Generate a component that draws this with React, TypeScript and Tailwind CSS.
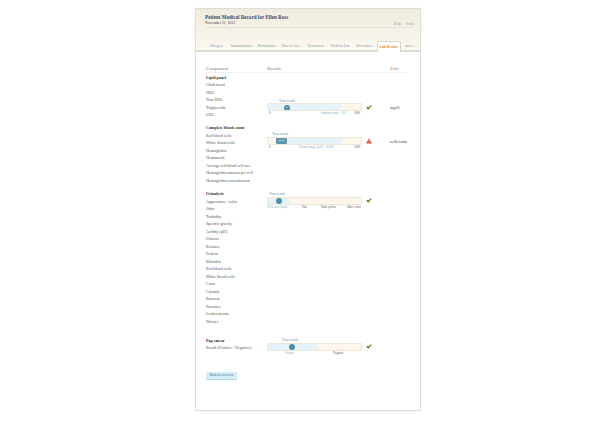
const font = "font-['Liberation_Serif',serif]";

const tabs = [
  { label: "Allergies", width: "w-[24px]" },
  { label: "Immunizations", width: "w-[27px]" },
  { label: "Medications", width: "w-[23px]" },
  { label: "Plan of Care", width: "w-[25px]" },
  { label: "Encounters", width: "w-[25px]" },
  { label: "Problem List", width: "w-[24px]" },
  { label: "Procedures", width: "w-[24.5px]" },
];

function Check() {
  return (
    <svg viewBox="0 0 12 10" className="w-[6px] h-[5px] shrink-0">
      <path d="M1 5.5 L4.5 9 L11 1.5 L10 1 L4.5 5.5 L2.5 4 Z" fill="#4f7f14" stroke="#4f7f14" strokeWidth="0.8" />
    </svg>
  );
}

function Warning() {
  return (
    <svg viewBox="0 0 12 11" className="w-[6px] h-[6px] shrink-0">
      <path d="M6 0.5 L11.8 10.5 H0.2 Z" fill="#d9402a" />
      <rect x="5.4" y="3.6" width="1.2" height="3.6" fill="#fff" />
      <rect x="5.4" y="8" width="1.2" height="1.2" fill="#fff" />
    </svg>
  );
}

function Row({ children }: { children: React.ReactNode }) {
  return <div className="h-[7.5px] leading-[7.5px] whitespace-nowrap">{children}</div>;
}

function Names({ title, names }: { title: string; names: string[] }) {
  return (
    <div className="w-[61px] shrink-0 text-[4.1px] text-[#555]">
      <div className="h-[7.5px] leading-[7.5px] font-bold text-[#333] whitespace-nowrap">{title}</div>
      {names.map((n) => (
        <Row key={n}>{n}</Row>
      ))}
    </div>
  );
}

function Track({ children }: { children: React.ReactNode }) {
  return (
    <div className="relative flex w-[95px] h-[8px] rounded-[1px] border border-[#eee6d8] bg-[#fdf6ec] overflow-hidden">
      {children}
    </div>
  );
}

export default function App() {
  return (
    <div className={`${font} w-[615px] h-[424px] bg-white pt-[8px] pl-[195px] text-[3.6px] text-[#555]`}>
      <div className="w-[226px] h-[403px] bg-white border border-[#dcdcdc] rounded-[1px] shadow-[0_0_1px_#ccc]">
        <div className="h-[43px] bg-gradient-to-b from-[#f1ebdf] to-[#fcf8f0] border-b-2 border-[#dcdad4] flex flex-col">
          <div className="ml-[9px] mr-[7px] h-[18.5px] pt-[5px] border-b border-[#e8e3d6] flex justify-between">
            <div>
              <div className="text-[5.1px] leading-[6px] font-bold text-[#2f4f6f] whitespace-nowrap">
                Patient Medical Record for Ellen Ross
              </div>
              <div className="text-[3.8px] leading-[6px] text-[#444]">November 21, 2012</div>
            </div>
            <div className="flex gap-[5.5px] items-end pb-[0.5px] text-[#8aa0a8] leading-[4px]">
              <span>Help</span>
              <span>Print</span>
            </div>
          </div>
          <div className="mt-auto flex items-end pl-[8px] h-[11px]">
            {tabs.map((t) => (
              <div key={t.label} className={`${t.width} h-[8px] leading-[8px] flex justify-center text-[#7f9aa3] whitespace-nowrap`}>
                {t.label}
              </div>
            ))}
            <div className="w-[24.5px] h-[11px] -mb-[2px] leading-[10px] bg-white border-t border-x border-[#cdd8c8] rounded-t-[2px] flex justify-center font-bold text-[#e88a1a] whitespace-nowrap">
              Lab Results
            </div>
            <div className="pl-[4px] h-[8px] leading-[8px] text-[#7f9aa3] whitespace-nowrap">more »</div>
          </div>
        </div>

        <div className="px-[10px] pt-[14px]">
          <div className="flex h-[7px] leading-[6px] text-[4.8px] italic text-[#777] border-b border-[#f0f0f0] mr-[2px]">
            <div className="w-[61px]">Component</div>
            <div className="w-[123px]">Results</div>
            <div>Unit</div>
          </div>

          <div className="flex mt-[0.5px]">
            <Names title="Lipid panel" names={["Cholesterol", "HDL", "Non-HDL", "Triglyceride", "LDL"]} />
            <div className="w-[123px] pt-[25px]">
              <div className="pl-[12px] h-[4px] leading-[4px] text-[#5b93a8]">Your result</div>
              <div className="flex items-center gap-[3.5px] mt-[0.5px]">
                <Track>
                  <div className="relative w-[73px] bg-[#e6f3fa]">
                    <div className="absolute left-[16px] top-[0.5px] w-[6px] h-[6px] rounded-full bg-[#4f8ea8] text-center text-[2.6px] leading-[6px] text-white">
                      98
                    </div>
                  </div>
                </Track>
                <Check />
              </div>
              <div className="relative w-[95px] h-[4px] leading-[4px] flex justify-between px-[2px] text-[3px]">
                <span>0</span>
                <span className="text-[#7fb0c4] pl-[42px]">Standard range &lt;150</span>
                <span>1000</span>
              </div>
            </div>
            <div className="pt-[30.5px] text-[4.1px] leading-[7.5px] text-[#444] whitespace-nowrap">mg/dl</div>
          </div>

          <div className="flex mt-[5.5px]">
            <Names
              title="Complete blood count"
              names={[
                "Red blood cells",
                "White blood cells",
                "Hemoglobin",
                "Hematocrit",
                "Average red blood cell size",
                "Hemoglobin amount per cell",
                "Hemoglobin concentration",
              ]}
            />
            <div className="w-[123px] pt-[8px]">
              <div className="pl-[5px] h-[4px] leading-[4px] text-[#5b93a8]">Your result</div>
              <div className="flex items-center gap-[3.5px] mt-[0.5px]">
                <Track>
                  <div className="w-[7px]" />
                  <div className="w-[66px] bg-[#e6f3fa]" />
                  <div className="absolute left-[8px] top-[0.5px] w-[11px] h-[6px] rounded-[1px] bg-[#5d97ab] text-center text-[2.6px] leading-[6px] text-white">
                    4,000
                  </div>
                </Track>
                <Warning />
              </div>
              <div className="relative w-[95px] h-[4px] leading-[4px] flex justify-between px-[2px] text-[3px]">
                <span>0</span>
                <span className="text-[#7fb0c4] pl-[8px]">Normal range 4,500 - 10,800</span>
                <span>1000</span>
              </div>
            </div>
            <div className="pt-[14px] text-[4.1px] leading-[7.5px] text-[#444] whitespace-nowrap">cells/cmm</div>
          </div>

          <div className="flex mt-[6px]">
            <Names
              title="Urinalysis"
              names={[
                "Appearance / color",
                "Odor",
                "Turbidity",
                "Specific gravity",
                "Acidity (pH)",
                "Glucose",
                "Ketones",
                "Protein",
                "Bilirubin",
                "Red blood cells",
                "White blood cells",
                "Casts",
                "Crystals",
                "Bacteria",
                "Parasites",
                "Leukoesterase",
                "Nitrites",
              ]}
            />
            <div className="w-[123px] mt-[2px]">
              <div className="pl-[2px] h-[4px] leading-[4px] text-[#5b93a8]">Your result</div>
              <div className="flex items-center gap-[3.5px] mt-[0.5px]">
                <Track>
                  <div className="relative w-[22px] bg-[#e6f3fa]">
                    <div className="absolute left-[8px] top-[0.5px] w-[6px] h-[6px] rounded-full bg-[#4f8ea8]" />
                  </div>
                </Track>
                <Check />
              </div>
              <div className="flex w-[95px] h-[4px] leading-[4px] text-[3px] whitespace-nowrap">
                <span className="w-[35px] text-[#7fb0c4]">Clear and cloudy</span>
                <span className="w-[19px]">Pale</span>
                <span className="w-[26px]">Dark yellow</span>
                <span>Other color</span>
              </div>
            </div>
          </div>

          <div className="flex mt-[11.5px]">
            <Names title="Pap smear" names={["Result (Positive / Negative)"]} />
            <div className="w-[123px] mt-[1.5px]">
              <div className="pl-[15px] h-[4px] leading-[4px] text-[#5b93a8]">Your result</div>
              <div className="flex items-center gap-[3.5px] mt-[0.5px]">
                <Track>
                  <div className="relative w-[49px] bg-[#e6f3fa]">
                    <div className="absolute left-[21px] top-[0.5px] w-[6px] h-[6px] rounded-full bg-[#4f8ea8]" />
                  </div>
                </Track>
                <Check />
              </div>
              <div className="flex w-[95px] h-[4px] leading-[4px] text-[3px]">
                <span className="w-[66px] pl-[18px] text-[#7fb0c4]">Positive</span>
                <span>Negative</span>
              </div>
            </div>
          </div>

          <button className="block mt-[17.5px] w-[31px] h-[8px] rounded-[1px] bg-[#d5eef6] border-b border-[#a9d6e6] text-[3.4px] leading-[7px] text-center text-[#3d6f82] whitespace-nowrap">
            Back to overview
          </button>
        </div>
      </div>
    </div>
  );
}
